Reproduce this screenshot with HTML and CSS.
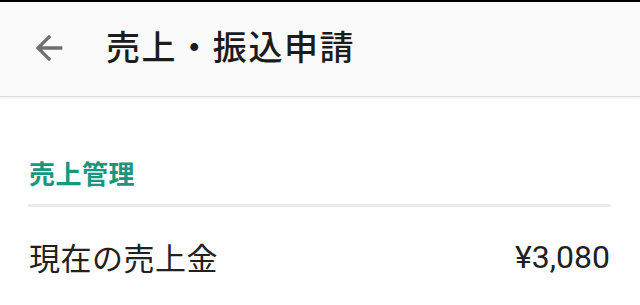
FILE: index.html
```html
<!DOCTYPE html>
<html lang="ja">
<head>
<meta charset="utf-8">
<link rel="stylesheet" href="styles.css">
</head>
<body>
<div class="statusbar"></div>
<header class="appbar">
  <svg class="back" viewBox="0 0 24 24" width="40" height="40" aria-hidden="true">
    <path d="M20 11H7.83l5.59-5.59L12 4l-8 8 8 8 1.41-1.41L7.83 13H20v-2z" fill="#6f6f6f"/>
  </svg>
  <h1 class="title">売上・振込申請</h1>
</header>
<main class="content">
  <h2 class="section-label">売上管理</h2>
  <div class="divider"></div>
  <div class="row">
    <span class="row-label">現在の売上金</span>
    <span class="row-value">¥3,080</span>
  </div>
</main>
</body>
</html>
```
FILE: styles.css
```css
html, body {
  margin: 0;
  padding: 0;
  background: #ffffff;
  width: 640px;
  height: 305px;
  overflow: hidden;
  font-family: "Noto Sans CJK JP", "Noto Sans", sans-serif;
  color: #212121;
}
.statusbar {
  height: 2px;
  background: #000000;
}
.appbar {
  height: 94px;
  background: #fafafa;
  display: flex;
  align-items: center;
  padding-left: 29px;
  box-shadow: 0 1px 0 #dcdcdc, 0 2px 2px rgba(0,0,0,0.08);
  position: relative;
}
.back {
  display: block;
  margin-top: -3px;
}
.title {
  margin: -6px 0 0 37px;
  font-size: 34px;
  font-weight: 500;
  letter-spacing: 1.6px;
  line-height: 40px;
  color: #1c1c1c;
}
.content {
  padding: 0 29px 0 28px;
}
.section-label {
  margin: 59px 0 0 1px;
  font-size: 26px;
  font-weight: 700;
  letter-spacing: 0.5px;
  line-height: 36px;
  color: #17977e;
}
.divider {
  margin-top: 13px;
  height: 3px;
  background: #ebebeb;
}
.row {
  margin-top: 30px;
  display: flex;
  justify-content: space-between;
  align-items: center;
  height: 40px;
}
.row-label {
  padding-left: 1px;
  font-size: 31px;
  letter-spacing: 0.5px;
  line-height: 40px;
}
.row-value {
  font-family: Roboto, "Noto Sans", sans-serif;
  font-size: 32px;
  line-height: 40px;
  margin-right: 1px;
}
```
